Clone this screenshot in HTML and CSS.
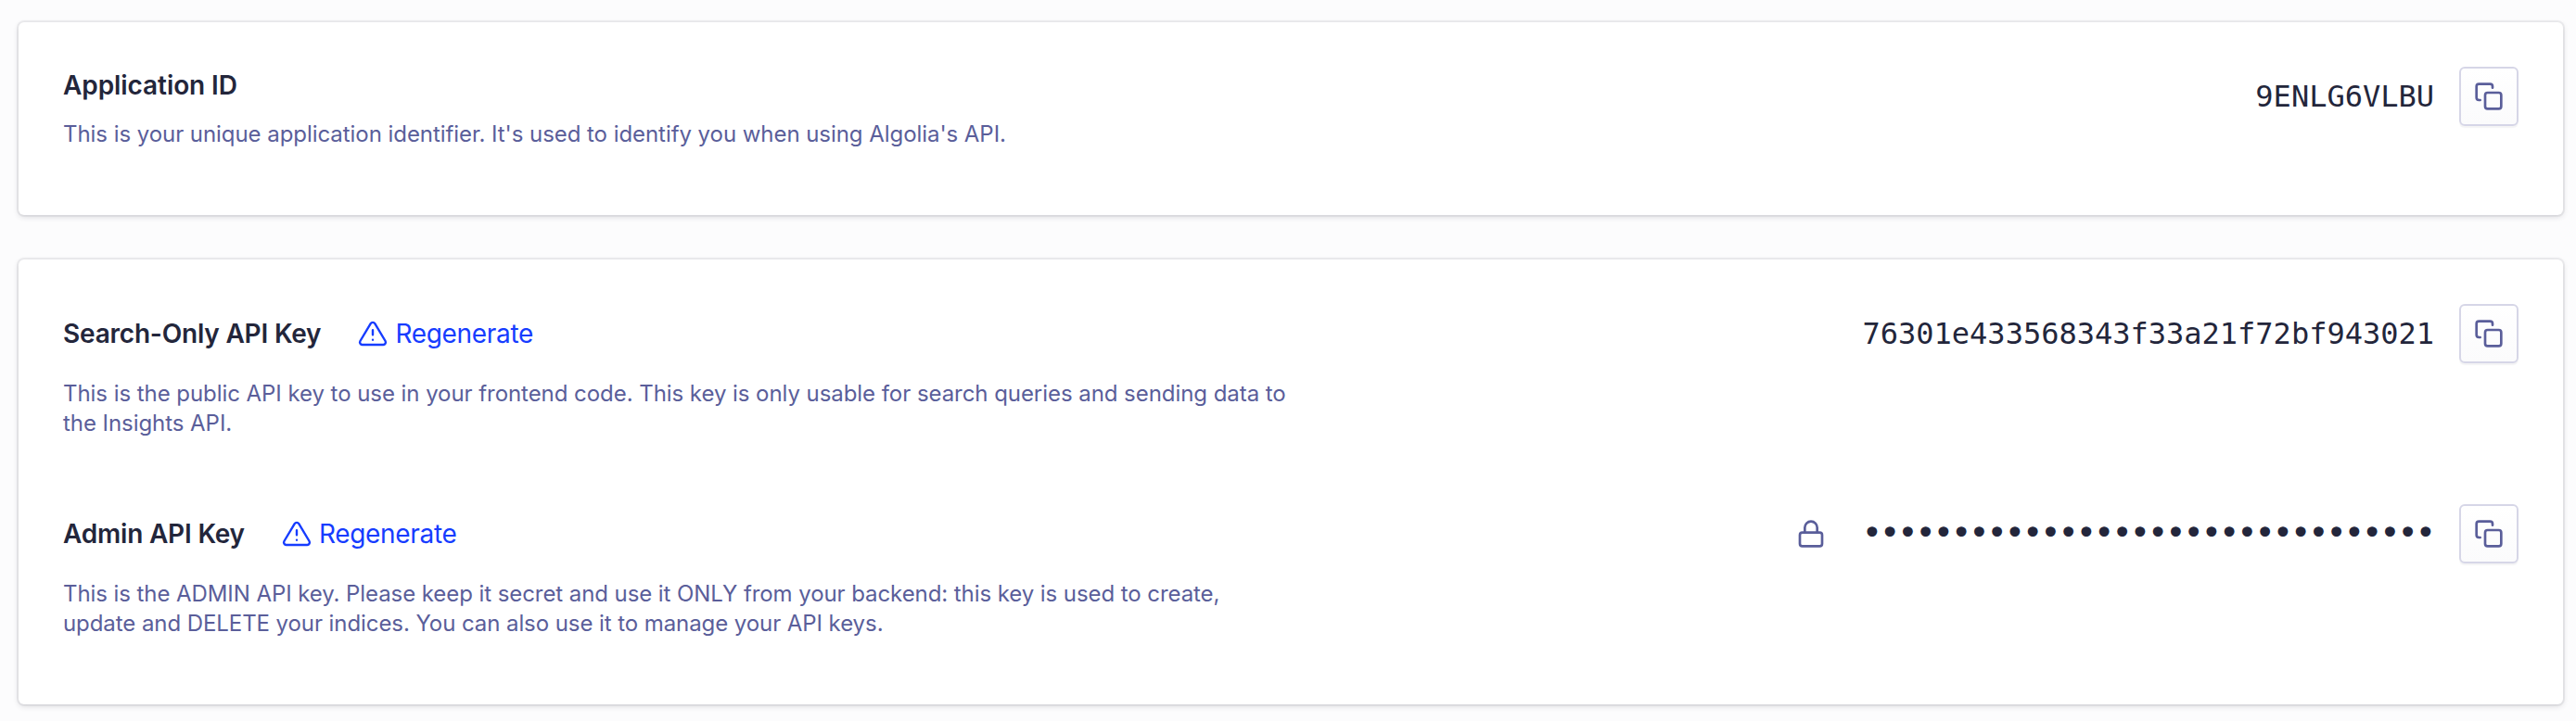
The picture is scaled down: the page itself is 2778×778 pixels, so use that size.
FILE: index.html
```
<!DOCTYPE html>
<html lang="en">
<head>
<meta charset="utf-8">
<title>API Keys</title>
<link rel="stylesheet" href="styles.css">
</head>
<body>
<svg class="sprite" aria-hidden="true">
  <symbol id="copy" viewBox="0 0 24 24"><rect x="9" y="9" width="13" height="13" rx="2"/><path d="M5 15H4a2 2 0 0 1-2-2V4a2 2 0 0 1 2-2h9a2 2 0 0 1 2 2v1"/></symbol>
  <symbol id="alert" viewBox="0 0 24 24"><path d="M10.29 3.86 1.82 18a2 2 0 0 0 1.71 3h16.94a2 2 0 0 0 1.71-3L13.71 3.86a2 2 0 0 0-3.42 0z"/><path d="M12 9.2v3.8M12 17h.01"/></symbol>
  <symbol id="lock" viewBox="0 0 24 24"><rect x="3" y="11" width="18" height="11" rx="2"/><path d="M7 11V7a5 5 0 0 1 10 0v4"/></symbol>
</svg>
<main class="page">
  <section class="card card-app">
    <div class="row">
      <div class="info">
        <h2 class="title title-app">Application ID</h2>
        <p class="desc">This is your unique application identifier. It's used to identify you when using Algolia's API.</p>
      </div>
      <div class="value">
        <code class="key">9ENLG6VLBU</code>
        <button class="copy" aria-label="Copy"><svg class="icon"><use href="#copy"/></svg></button>
      </div>
    </div>
  </section>
  <section class="card card-keys">
    <div class="row">
      <div class="info">
        <div class="head"><h2 class="title">Search-Only API Key</h2><a class="regen"><svg class="icon icon-alert"><use href="#alert"/></svg>Regenerate</a></div>
        <p class="desc">This is the public API key to use in your frontend code. This key is only usable for search queries and sending data to<br>the Insights API.</p>
      </div>
      <div class="value">
        <code class="key">76301e433568343f33a21f72bf943021</code>
        <button class="copy" aria-label="Copy"><svg class="icon"><use href="#copy"/></svg></button>
      </div>
    </div>
    <div class="row">
      <div class="info">
        <div class="head"><h2 class="title">Admin API Key</h2><a class="regen"><svg class="icon icon-alert"><use href="#alert"/></svg>Regenerate</a></div>
        <p class="desc desc-admin">This is the ADMIN API key. Please keep it secret and use it ONLY from your backend: this key is used to create,<br>update and DELETE your indices. You can also use it to manage your API keys.</p>
      </div>
      <div class="value">
        <svg class="icon icon-lock"><use href="#lock"/></svg>
        <code class="key key-masked">••••••••••••••••••••••••••••••••</code>
        <button class="copy" aria-label="Copy"><svg class="icon"><use href="#copy"/></svg></button>
      </div>
    </div>
  </section>
</main>
</body>
</html>
```
FILE: styles.css
```
* { box-sizing: border-box; }
body { margin: 0; background: #fcfcfd; font-family: Inter, "Liberation Sans", sans-serif; color: #23263b; }
.sprite { position: absolute; width: 0; height: 0; }
.page { height: 778px; padding: 24px 14px 18px 20px; display: flex; flex-direction: column; gap: 48px; }
.card { background: #fff; border-radius: 6px; padding: 48px; box-shadow: 0 0 0 2px rgba(35, 38, 59, .06), 0 2px 6px rgba(35, 38, 59, .16); }
.card-app { height: 208px; }
.card-keys { height: 480px; display: flex; flex-direction: column; gap: 71px; }
.row { display: flex; justify-content: space-between; align-items: flex-start; }
.row .info { min-height: 145px; }
.head { display: flex; align-items: center; height: 64px; gap: 40px; }
.title { margin: 0; font-size: 28px; line-height: 40px; font-weight: 600; letter-spacing: -.2px; white-space: nowrap; }
.title-app { letter-spacing: -.08px; }
.regen { display: flex; align-items: center; gap: 8px; font-size: 28px; line-height: 40px; letter-spacing: -.32px; color: #163cff; }
.desc { margin: 17px 0 0; font-size: 24px; line-height: 32px; letter-spacing: -.055px; color: #5a5e9a; white-space: nowrap; }
.desc-admin { letter-spacing: -.075px; }
.value { display: flex; align-items: center; }
.key { font: 32px/40px "DejaVu Sans Mono", monospace; margin-right: 27px; }
.key-masked { font-size: 37px; letter-spacing: -3.02px; margin: 0 28px 0 -1px; }
.copy { width: 64px; height: 64px; padding: 0; display: flex; align-items: center; justify-content: center; border: 2px solid #d6d6e7; border-radius: 6px; background: linear-gradient(#fff, #fbfbfc); box-shadow: 0 2px 1px rgba(35, 38, 59, .05); }
.icon { width: 32px; height: 32px; fill: none; stroke: currentColor; stroke-width: 2; stroke-linecap: round; stroke-linejoin: round; color: #5a5e9a; }
.icon-alert { stroke-width: 1.8; color: #163cff; }
.icon-lock { margin-right: 40px; }
```
